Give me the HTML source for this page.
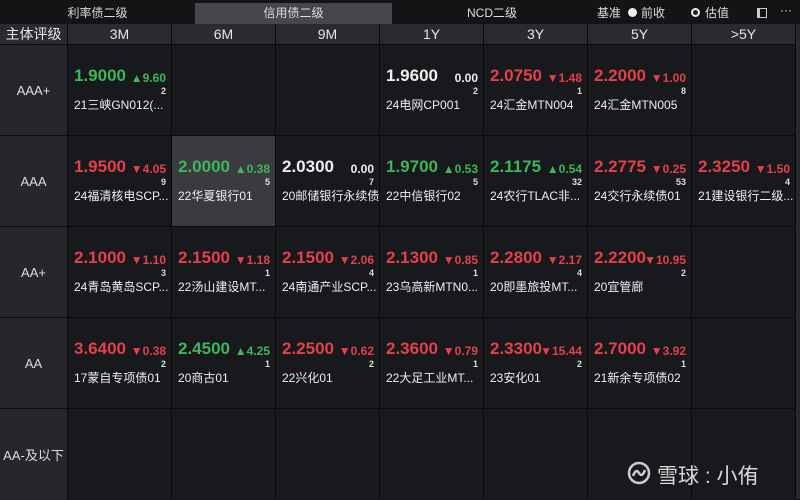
<!DOCTYPE html>
<html><head><meta charset="utf-8"><style>
*{margin:0;padding:0;box-sizing:border-box}
body{width:800px;height:499px;background:#0d0d0f;overflow:hidden;font-family:"Liberation Sans","Noto Sans CJK SC",sans-serif;color:#e6e6e6;position:relative}
.top{position:absolute;left:0;top:0;width:800px;height:24px;background:#141417}
.tab{position:absolute;top:3px;height:21px;line-height:21px;font-size:12px;text-align:center;color:#ddd}
.g{display:grid;position:absolute;left:0;top:24px;width:796px;height:475px;grid-template-columns:67px repeat(7,103px);grid-template-rows:20px 90px 90px 90px 90px 91px;gap:1px;background:#0b0b0d}
.h{background:#2a2b2f;text-align:center;font-size:14px;line-height:20px;color:#e6e6e6}
.l{background:#26272b;display:flex;align-items:center;justify-content:center;font-size:13px;color:#ddd}
.c{background:#18191c;position:relative}
.c.hl{background:#3b3b3f}
.p{position:absolute;left:6px;top:21px;font-size:17px;font-weight:bold}
.d{position:absolute;right:5px;top:26px;font-size:12px;font-weight:bold}
.n{position:absolute;right:5px;top:41px;font-size:9px;font-weight:bold;color:#ddd}
.nm{position:absolute;left:6px;top:51px;font-size:12px;color:#eee;white-space:nowrap}
.G{color:#3db55b}.R{color:#e3404b}.W{color:#eee}
</style></head><body>
<div class="top"></div>
<div class="tab" style="left:0;width:195px">利率债二级</div>
<div class="tab" style="left:195px;width:197px;background:#46464e">信用债二级</div>
<div class="tab" style="left:392px;width:200px">NCD二级</div>
<div class="tab" style="left:594px;width:30px">基准</div>
<div style="position:absolute;left:628px;top:8px;width:9px;height:9px;border-radius:50%;background:#eee"></div>
<div class="tab" style="left:640px;width:26px">前收</div>
<div style="position:absolute;left:691px;top:8px;width:9px;height:9px;border-radius:50%;border:2px solid #eee;background:#222"></div>
<div class="tab" style="left:704px;width:26px">估值</div>
<div style="position:absolute;left:757px;top:8px;width:10px;height:10px;border:1px solid #ccc;border-left-width:3px"></div>
<div class="tab" style="left:775px;width:22px;top:0">···</div>
<div style="position:absolute;left:796px;top:24px;width:4px;height:475px;background:#2a2a2e"></div>
<div class="g">
<div class="h">主体评级</div><div class="h">3M</div><div class="h">6M</div><div class="h">9M</div><div class="h">1Y</div><div class="h">3Y</div><div class="h">5Y</div><div class="h">&gt;5Y</div>

<div class="l">AAA+</div>
<div class="c"><span class="p G">1.9000</span><span class="d G">▲9.60</span><span class="n">2</span><span class="nm">21三峡GN012(...</span></div>
<div class="c"></div><div class="c"></div>
<div class="c"><span class="p W">1.9600</span><span class="d W">0.00</span><span class="n">2</span><span class="nm">24电网CP001</span></div>
<div class="c"><span class="p R">2.0750</span><span class="d R">▼1.48</span><span class="n">1</span><span class="nm">24汇金MTN004</span></div>
<div class="c"><span class="p R">2.2000</span><span class="d R">▼1.00</span><span class="n">8</span><span class="nm">24汇金MTN005</span></div>
<div class="c"></div>

<div class="l">AAA</div>
<div class="c"><span class="p R">1.9500</span><span class="d R">▼4.05</span><span class="n">9</span><span class="nm">24福清核电SCP...</span></div>
<div class="c hl"><span class="p G">2.0000</span><span class="d G">▲0.38</span><span class="n">5</span><span class="nm">22华夏银行01</span></div>
<div class="c"><span class="p W">2.0300</span><span class="d W">0.00</span><span class="n">7</span><span class="nm">20邮储银行永续债</span></div>
<div class="c"><span class="p G">1.9700</span><span class="d G">▲0.53</span><span class="n">5</span><span class="nm">22中信银行02</span></div>
<div class="c"><span class="p G">2.1175</span><span class="d G">▲0.54</span><span class="n">32</span><span class="nm">24农行TLAC非...</span></div>
<div class="c"><span class="p R">2.2775</span><span class="d R">▼0.25</span><span class="n">53</span><span class="nm">24交行永续债01</span></div>
<div class="c"><span class="p R">2.3250</span><span class="d R">▼1.50</span><span class="n">4</span><span class="nm">21建设银行二级...</span></div>

<div class="l">AA+</div>
<div class="c"><span class="p R">2.1000</span><span class="d R">▼1.10</span><span class="n">3</span><span class="nm">24青岛黄岛SCP...</span></div>
<div class="c"><span class="p R">2.1500</span><span class="d R">▼1.18</span><span class="n">1</span><span class="nm">22汤山建设MT...</span></div>
<div class="c"><span class="p R">2.1500</span><span class="d R">▼2.06</span><span class="n">4</span><span class="nm">24南通产业SCP...</span></div>
<div class="c"><span class="p R">2.1300</span><span class="d R">▼0.85</span><span class="n">1</span><span class="nm">23乌高新MTN0...</span></div>
<div class="c"><span class="p R">2.2800</span><span class="d R">▼2.17</span><span class="n">4</span><span class="nm">20即墨旅投MT...</span></div>
<div class="c"><span class="p R">2.2200</span><span class="d R">▼10.95</span><span class="n">2</span><span class="nm">20宜管廊</span></div>
<div class="c"></div>

<div class="l">AA</div>
<div class="c"><span class="p R">3.6400</span><span class="d R">▼0.38</span><span class="n">2</span><span class="nm">17蒙自专项债01</span></div>
<div class="c"><span class="p G">2.4500</span><span class="d G">▲4.25</span><span class="n">1</span><span class="nm">20商古01</span></div>
<div class="c"><span class="p R">2.2500</span><span class="d R">▼0.62</span><span class="n">2</span><span class="nm">22兴化01</span></div>
<div class="c"><span class="p R">2.3600</span><span class="d R">▼0.79</span><span class="n">1</span><span class="nm">22大足工业MT...</span></div>
<div class="c"><span class="p R">2.3300</span><span class="d R">▼15.44</span><span class="n">2</span><span class="nm">23安化01</span></div>
<div class="c"><span class="p R">2.7000</span><span class="d R">▼3.92</span><span class="n">1</span><span class="nm">21新余专项债02</span></div>
<div class="c"></div>

<div class="l">AA-及以下</div>
<div class="c"></div><div class="c"></div><div class="c"></div><div class="c"></div><div class="c"></div><div class="c"></div><div class="c"></div>
</div>
<svg style="position:absolute;left:627px;top:461px" width="24" height="24" viewBox="0 0 24 24"><circle cx="12" cy="12" r="10" fill="none" stroke="#ccc" stroke-width="2.5"/><path d="M6 15 Q9 7 12 12 Q15 17 18 9" fill="none" stroke="#ccc" stroke-width="2.5"/></svg>
<div style="position:absolute;left:657px;top:460px;font-size:21px;color:#d8d8d8;white-space:nowrap">雪球 : 小侑</div>
</body></html>
